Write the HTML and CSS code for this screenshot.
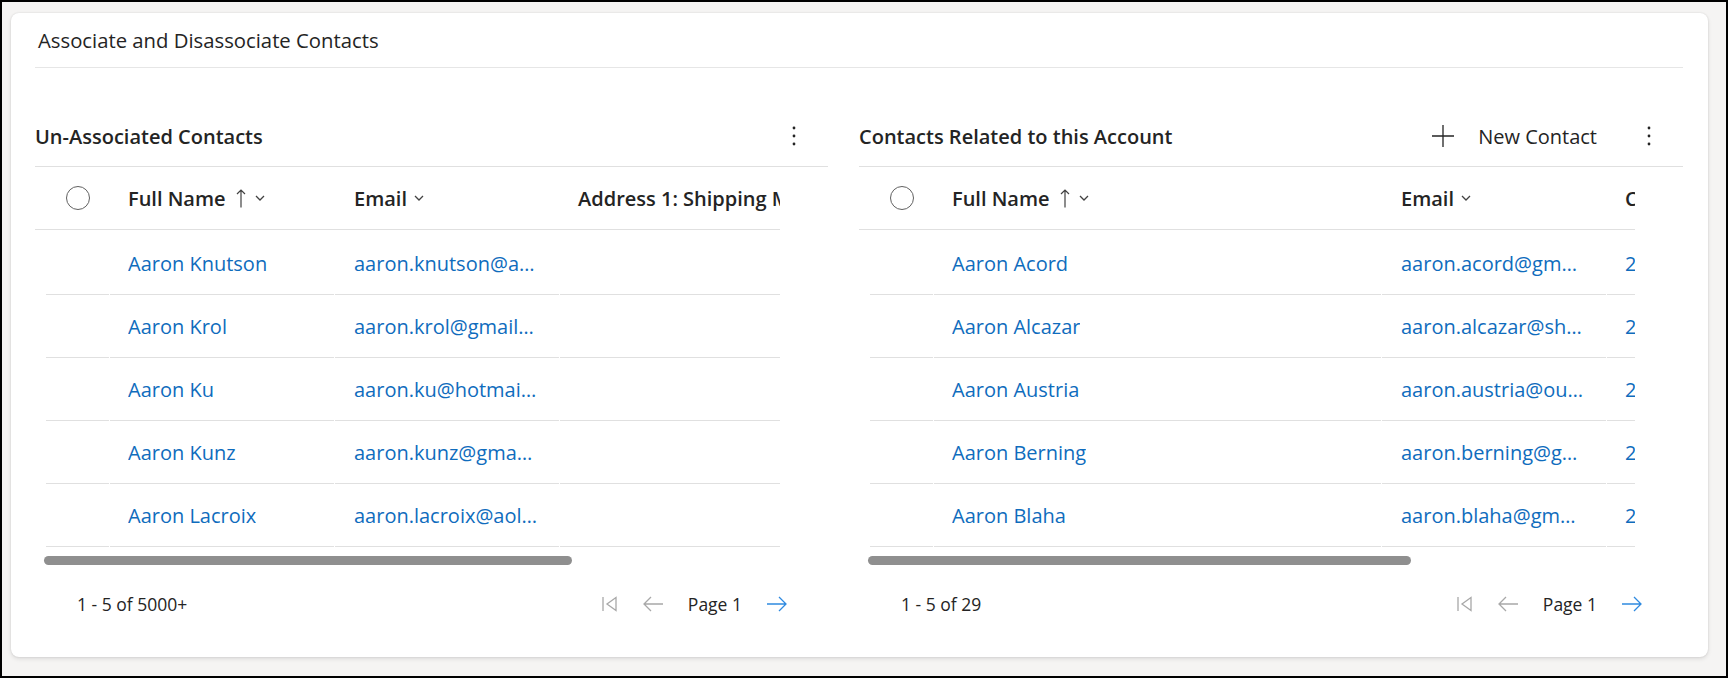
FILE: index.html
```html
<!DOCTYPE html>
<html lang="en">
<head>
  <meta charset="utf-8" />
  <title>Associate and Disassociate Contacts</title>
  <link rel="stylesheet" href="styles.css">
</head>
<body>
  <div class="frame">
    <div class="card">
      <div class="card-title">Associate and Disassociate Contacts</div>

      <div class="panels">
        <!-- left: contacts not linked to the account -->
        <section class="panel panel-left">
          <div class="panel-head">
            <h2>Un-Associated Contacts</h2>
            <button class="more" title="More commands">
              <svg width="4" height="20" viewBox="0 0 4 20"><circle cx="2" cy="2" r="1.4"/><circle cx="2" cy="10" r="1.4"/><circle cx="2" cy="18" r="1.4"/></svg>
            </button>
          </div>

          <div class="grid">
            <div class="grid-view">
              <div class="grid-header">
                <div class="cell col-sel"><span class="check"></span></div>
                <div class="cell col-name">Full Name
                  <svg class="sort" width="10" height="19" viewBox="0 0 10 19"><path d="M5 18.5V1M1 5l4-4 4 4"/></svg>
                  <svg class="chev" width="10" height="6" viewBox="0 0 10 6"><path d="M1 1l4 4 4-4"/></svg>
                </div>
                <div class="cell col-email">Email
                  <svg class="chev" width="10" height="6" viewBox="0 0 10 6"><path d="M1 1l4 4 4-4"/></svg>
                </div>
                <div class="cell col-extra">Address 1: Shipping Method</div>
              </div>
              <div class="grid-body">
                <div class="grid-row"><div class="cell col-sel"></div><div class="cell col-name"><a>Aaron Knutson</a></div><div class="cell col-email"><a>aaron.knutson@a…</a></div><div class="cell col-extra"></div></div>
                <div class="grid-row"><div class="cell col-sel"></div><div class="cell col-name"><a>Aaron Krol</a></div><div class="cell col-email"><a>aaron.krol@gmail…</a></div><div class="cell col-extra"></div></div>
                <div class="grid-row"><div class="cell col-sel"></div><div class="cell col-name"><a>Aaron Ku</a></div><div class="cell col-email"><a>aaron.ku@hotmai…</a></div><div class="cell col-extra"></div></div>
                <div class="grid-row"><div class="cell col-sel"></div><div class="cell col-name"><a>Aaron Kunz</a></div><div class="cell col-email"><a>aaron.kunz@gma…</a></div><div class="cell col-extra"></div></div>
                <div class="grid-row"><div class="cell col-sel"></div><div class="cell col-name"><a>Aaron Lacroix</a></div><div class="cell col-email"><a>aaron.lacroix@aol…</a></div><div class="cell col-extra"></div></div>
              </div>
            </div>
            <div class="hscroll"><div class="hscroll-thumb" style="width: 528px"></div></div>
          </div>

          <div class="pager">
            <span class="pager-count">1 - 5 of 5000+</span>
            <div class="pager-nav">
              <svg class="nav-off" width="16" height="16" viewBox="0 0 16 16"><path d="M1 1v14M14 1.5 5 8l9 6.5z"/></svg>
              <svg class="nav-off" width="20" height="16" viewBox="0 0 20 16"><path d="M20 8H1.5M8 1 1 8l7 7"/></svg>
              <span class="page-label">Page 1</span>
              <svg class="nav-on" width="20" height="16" viewBox="0 0 20 16"><path d="M0 8h18.5M12 1l7 7-7 7"/></svg>
            </div>
          </div>
        </section>

        <!-- right: contacts linked to the account -->
        <section class="panel panel-right">
          <div class="panel-head">
            <h2>Contacts Related to this Account</h2>
            <button class="new-btn">
              <svg width="22" height="22" viewBox="0 0 22 22"><path d="M11 0v22M0 11h22"/></svg>
              <span>New Contact</span>
            </button>
            <button class="more" title="More commands">
              <svg width="4" height="20" viewBox="0 0 4 20"><circle cx="2" cy="2" r="1.4"/><circle cx="2" cy="10" r="1.4"/><circle cx="2" cy="18" r="1.4"/></svg>
            </button>
          </div>

          <div class="grid">
            <div class="grid-view">
              <div class="grid-header">
                <div class="cell col-sel"><span class="check"></span></div>
                <div class="cell col-name wide">Full Name
                  <svg class="sort" width="10" height="19" viewBox="0 0 10 19"><path d="M5 18.5V1M1 5l4-4 4 4"/></svg>
                  <svg class="chev" width="10" height="6" viewBox="0 0 10 6"><path d="M1 1l4 4 4-4"/></svg>
                </div>
                <div class="cell col-email">Email
                  <svg class="chev" width="10" height="6" viewBox="0 0 10 6"><path d="M1 1l4 4 4-4"/></svg>
                </div>
                <div class="cell col-extra">Created On</div>
              </div>
              <div class="grid-body">
                <div class="grid-row"><div class="cell col-sel"></div><div class="cell col-name wide"><a>Aaron Acord</a></div><div class="cell col-email"><a>aaron.acord@gm…</a></div><div class="cell col-extra"><a>2/14/2024 9:12 AM</a></div></div>
                <div class="grid-row"><div class="cell col-sel"></div><div class="cell col-name wide"><a>Aaron Alcazar</a></div><div class="cell col-email"><a>aaron.alcazar@sh…</a></div><div class="cell col-extra"><a>2/14/2024 9:12 AM</a></div></div>
                <div class="grid-row"><div class="cell col-sel"></div><div class="cell col-name wide"><a>Aaron Austria</a></div><div class="cell col-email"><a>aaron.austria@ou…</a></div><div class="cell col-extra"><a>2/14/2024 9:12 AM</a></div></div>
                <div class="grid-row"><div class="cell col-sel"></div><div class="cell col-name wide"><a>Aaron Berning</a></div><div class="cell col-email"><a>aaron.berning@g…</a></div><div class="cell col-extra"><a>2/14/2024 9:12 AM</a></div></div>
                <div class="grid-row"><div class="cell col-sel"></div><div class="cell col-name wide"><a>Aaron Blaha</a></div><div class="cell col-email"><a>aaron.blaha@gm…</a></div><div class="cell col-extra"><a>2/14/2024 9:12 AM</a></div></div>
              </div>
            </div>
            <div class="hscroll"><div class="hscroll-thumb" style="width: 543px"></div></div>
          </div>

          <div class="pager">
            <span class="pager-count">1 - 5 of 29</span>
            <div class="pager-nav">
              <svg class="nav-off" width="16" height="16" viewBox="0 0 16 16"><path d="M1 1v14M14 1.5 5 8l9 6.5z"/></svg>
              <svg class="nav-off" width="20" height="16" viewBox="0 0 20 16"><path d="M20 8H1.5M8 1 1 8l7 7"/></svg>
              <span class="page-label">Page 1</span>
              <svg class="nav-on" width="20" height="16" viewBox="0 0 20 16"><path d="M0 8h18.5M12 1l7 7-7 7"/></svg>
            </div>
          </div>
        </section>
      </div>
    </div>
  </div>
</body>
</html>
```

FILE: styles.css
```css
html,
body {
  margin: 0;
}

body {
  font-family: "Segoe UI", "Open Sans", sans-serif;
  color: #242424;
  background: #fff;
}

.frame {
  box-sizing: border-box;
  height: 678px;
  border: 2px solid #000;
  background: #f5f4f3;
  padding: 11px 18px 19px 9px;
}

.card {
  box-sizing: border-box;
  height: 100%;
  background: #fff;
  border-radius: 8px;
  box-shadow: 0 0 2px rgba(0, 0, 0, 0.12), 0 2px 4px rgba(0, 0, 0, 0.1);
  padding: 0 25px 0 24px;
}

.card-title {
  font-size: 20.3px;
  font-weight: 500;
  line-height: 28px;
  padding: 13px 0 13px 3px;
  border-bottom: 1px solid #e6e6e6;
}

.panels {
  display: flex;
  gap: 31px;
  padding-top: 38px;
}

.panel-left {
  flex: none;
  width: 793px;
}

.panel-right {
  flex: 1;
  min-width: 0;
}

.panel-head {
  display: flex;
  align-items: center;
  height: 60px;
  border-bottom: 1px solid #e0e0e0;
}

.panel-head h2 {
  flex: 1;
  margin: 0;
  font-size: 20px;
  font-weight: 600;
}

button {
  font: inherit;
  color: inherit;
  background: none;
  border: none;
  padding: 0;
  cursor: pointer;
}

.more {
  width: 36px;
  height: 40px;
  margin-right: 16px;
  display: flex;
  align-items: center;
  justify-content: center;
}

.more svg {
  fill: #242424;
}

.new-btn {
  display: flex;
  align-items: center;
  gap: 24px;
  font-size: 20px;
  margin-right: 34px;
}

.new-btn svg {
  stroke: #242424;
  stroke-width: 1.3;
}

/* grid */

.grid {
  margin-right: 48px;
}

.grid-view {
  overflow: hidden;
}

.grid-header,
.grid-row {
  display: flex;
  gap: 1px;
  padding-left: 11px;
  white-space: nowrap;
}

.grid-header {
  height: 62px;
  align-items: center;
  border-bottom: 1px solid #e0e0e0;
  font-size: 20px;
  font-weight: 600;
}

.grid-body {
  padding-top: 2px;
}

.grid-row .cell {
  box-sizing: border-box;
  height: 63px;
  display: flex;
  align-items: center;
  border-bottom: 1px solid #e0e0e0;
  font-size: 20px;
}

.cell {
  flex: none;
  overflow: hidden;
  text-overflow: ellipsis;
  display: flex;
  align-items: center;
}

.cell a {
  color: #0f6cbd;
  overflow: hidden;
  text-overflow: ellipsis;
}

.col-sel {
  width: 63px;
  justify-content: center;
}

.col-name {
  width: 224px;
  padding-left: 18px;
  box-sizing: border-box;
}

.col-name.wide {
  width: 447px;
}

.col-email {
  width: 224px;
  padding-left: 19px;
  padding-right: 16px;
  box-sizing: border-box;
}

.col-extra {
  width: 300px;
  padding-left: 18px;
  box-sizing: border-box;
}

.check {
  width: 22px;
  height: 22px;
  border: 1px solid #616161;
  border-radius: 50%;
  margin-left: 1px;
}

.sort {
  margin-left: 10px;
  fill: none;
  stroke: #424242;
  stroke-width: 1.2;
}

.chev {
  margin-left: 9px;
  fill: none;
  stroke: #424242;
  stroke-width: 1.3;
}

.col-email .chev {
  margin-left: 7px;
}

.hscroll {
  height: 9px;
  margin: 9px 0 0 9px;
}

.hscroll-thumb {
  height: 100%;
  background: #8f8f8f;
  border-radius: 5px;
}

/* paging */

.pager {
  display: flex;
  align-items: center;
  height: 50px;
  margin: 14px 41px 0 0;
  padding-left: 42px;
  font-size: 17.5px;
}

.pager-nav {
  margin-left: auto;
  display: flex;
  align-items: center;
  gap: 25px;
}

.pager-nav svg {
  fill: none;
  stroke-width: 1.3;
}

.nav-off {
  stroke: #a8a8a8;
}

.nav-on {
  stroke: #2f8ae0;
}

.page-label {
  color: #242424;
}
```
